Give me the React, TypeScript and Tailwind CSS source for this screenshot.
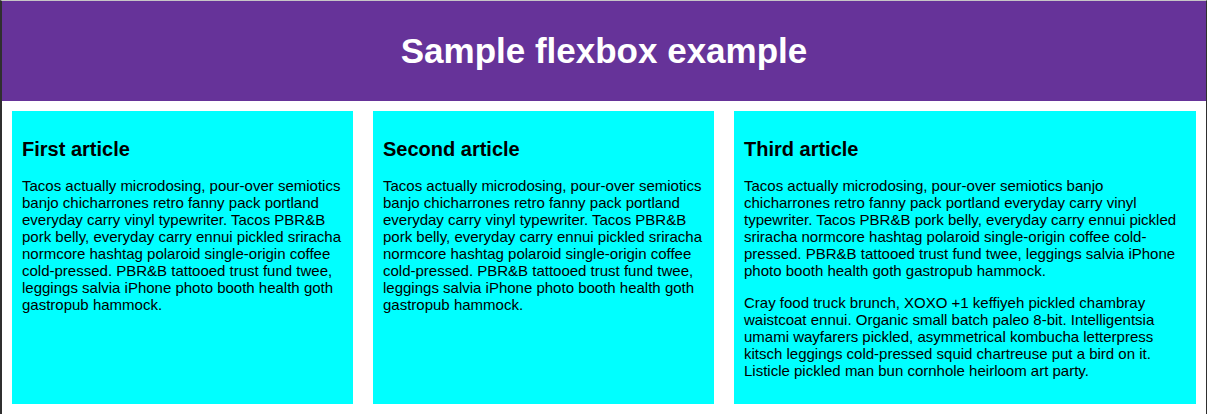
import React from "react";

const p1 =
  "Tacos actually microdosing, pour-over semiotics banjo chicharrones retro fanny pack portland everyday carry vinyl typewriter. Tacos PBR&B pork belly, everyday carry ennui pickled sriracha normcore hashtag polaroid single-origin coffee cold-pressed. PBR&B tattooed trust fund twee, leggings salvia iPhone photo booth health goth gastropub hammock.";
const p2 =
  "Cray food truck brunch, XOXO +1 keffiyeh pickled chambray waistcoat ennui. Organic small batch paleo 8-bit. Intelligentsia umami wayfarers pickled, asymmetrical kombucha letterpress kitsch leggings cold-pressed squid chartreuse put a bird on it. Listicle pickled man bun cornhole heirloom art party.";

function Article({ title, paras, grow }: { title: string; paras: string[]; grow?: boolean }) {
  return (
    <article
      className={
        (grow ? "flex-[2_1_220px]" : "flex-[1_1_220px]") +
        " m-[10px] p-[10px] bg-[#00ffff] text-black min-w-0"
      }
    >
      <h2 className="text-[20px] font-bold leading-[23px] my-[16.6px]">{title}</h2>
      {paras.map((t, i) => (
        <p key={i} className="text-[15px] leading-[17px] my-[15px]">
          {t}
        </p>
      ))}
    </article>
  );
}

export default function App() {
  return (
    <div
      className="w-[1207px] h-[414px] overflow-hidden bg-white border-t border-t-[#c6c6c6] border-l-2 border-l-[#2f2f2f] border-r border-r-[#2f2f2f]"
      style={{ fontFamily: '"Liberation Sans", Arial, sans-serif' }}
    >
      <header className="h-[100px] bg-[#663399]">
        <h1 className="text-center text-white font-bold text-[35px] leading-[100px] m-0">
          Sample flexbox example
        </h1>
      </header>
      <section className="flex">
        <Article title="First article" paras={[p1]} />
        <Article title="Second article" paras={[p1]} />
        <Article title="Third article" paras={[p1, p2]} grow />
      </section>
    </div>
  );
}
